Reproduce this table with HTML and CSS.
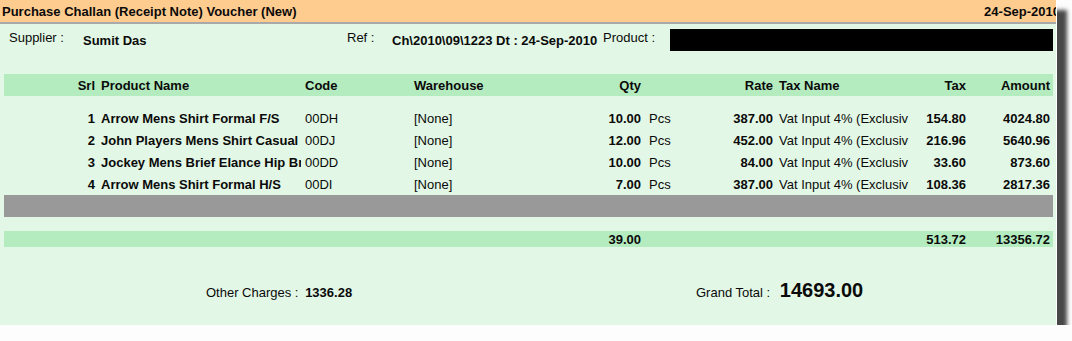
FILE: index.html
```html
<!DOCTYPE html>
<html lang="en">
<head>
    <meta charset="UTF-8">
    <meta name="viewport" content="width=device-width, initial-scale=1.0">
    <title>Purchase Challan (Receipt Note) Voucher</title>
    <link rel="stylesheet" href="styles.css">
</head>
<body>
    <div class="voucher">
        <div class="title-bar">
            <span>Purchase Challan (Receipt Note) Voucher (New)</span>
            <span class="title-date">24-Sep-2010</span>
        </div>

        <div class="party-row">
            <span class="label label-supplier">Supplier :</span>
            <span class="value value-supplier">Sumit Das</span>
            <span class="label label-ref">Ref :</span>
            <span class="value value-ref">Ch\2010\09\1223 Dt : 24-Sep-2010</span>
            <span class="label label-product">Product :</span>
            <div class="product-box"></div>
        </div>

        <div class="grid grid-head">
            <div class="c-srl">Srl</div>
            <div class="c-name">Product Name</div>
            <div class="c-code">Code</div>
            <div class="c-wh">Warehouse</div>
            <div class="c-qty">Qty</div>
            <div class="c-unit"></div>
            <div class="c-rate">Rate</div>
            <div class="c-taxname">Tax Name</div>
            <div class="c-tax">Tax</div>
            <div class="c-amt">Amount</div>
        </div>

        <div class="lines">
            <div class="grid grid-line">
                <div class="c-srl">1</div>
                <div class="c-name">Arrow Mens Shirt Formal F/S</div>
                <div class="c-code">00DH</div>
                <div class="c-wh">[None]</div>
                <div class="c-qty">10.00</div>
                <div class="c-unit">Pcs</div>
                <div class="c-rate">387.00</div>
                <div class="c-taxname">Vat Input 4% (Exclusiv</div>
                <div class="c-tax">154.80</div>
                <div class="c-amt">4024.80</div>
            </div>
            <div class="grid grid-line">
                <div class="c-srl">2</div>
                <div class="c-name">John Players Mens Shirt Casual</div>
                <div class="c-code">00DJ</div>
                <div class="c-wh">[None]</div>
                <div class="c-qty">12.00</div>
                <div class="c-unit">Pcs</div>
                <div class="c-rate">452.00</div>
                <div class="c-taxname">Vat Input 4% (Exclusiv</div>
                <div class="c-tax">216.96</div>
                <div class="c-amt">5640.96</div>
            </div>
            <div class="grid grid-line">
                <div class="c-srl">3</div>
                <div class="c-name">Jockey Mens Brief Elance Hip Brief</div>
                <div class="c-code">00DD</div>
                <div class="c-wh">[None]</div>
                <div class="c-qty">10.00</div>
                <div class="c-unit">Pcs</div>
                <div class="c-rate">84.00</div>
                <div class="c-taxname">Vat Input 4% (Exclusiv</div>
                <div class="c-tax">33.60</div>
                <div class="c-amt">873.60</div>
            </div>
            <div class="grid grid-line">
                <div class="c-srl">4</div>
                <div class="c-name">Arrow Mens Shirt Formal H/S</div>
                <div class="c-code">00DI</div>
                <div class="c-wh">[None]</div>
                <div class="c-qty">7.00</div>
                <div class="c-unit">Pcs</div>
                <div class="c-rate">387.00</div>
                <div class="c-taxname">Vat Input 4% (Exclusiv</div>
                <div class="c-tax">108.36</div>
                <div class="c-amt">2817.36</div>
            </div>
        </div>

        <!-- empty row waiting for the next item -->
        <div class="new-line"></div>

        <div class="grid grid-total">
            <div class="c-srl"></div>
            <div class="c-name"></div>
            <div class="c-code"></div>
            <div class="c-wh"></div>
            <div class="c-qty">39.00</div>
            <div class="c-unit"></div>
            <div class="c-rate"></div>
            <div class="c-taxname"></div>
            <div class="c-tax">513.72</div>
            <div class="c-amt">13356.72</div>
        </div>

        <div class="summary">
            <div class="other-charges">
                <span class="sum-label">Other Charges :</span>
                <span class="sum-value">1336.28</span>
            </div>
            <div class="grand-total">
                <span class="sum-label">Grand Total :</span>
                <span class="grand-value">14693.00</span>
            </div>
        </div>
    </div>
</body>
</html>
```

FILE: styles.css
```css
body {
    margin: 0;
    padding: 0;
    background-color: #fdfdfd;
    font-family: "Liberation Sans", Arial, sans-serif;
    font-size: 13px;
    color: #0a0a0a;
}

.voucher {
    width: 1056px;
    height: 325px;
    background-color: #e2f7e5;
    border-right: 1px solid #ffffff;
    box-shadow: 10px 10px 4px rgba(40, 40, 40, 0.85);
    overflow: hidden;
}

.title-bar {
    display: flex;
    justify-content: space-between;
    align-items: center;
    height: 22px;
    padding-left: 2px;
    background-color: #ffcc8f;
    border-bottom: 2px solid #a9a9a9;
    font-weight: bold;
    white-space: nowrap;
}

.title-date {
    margin-right: -4px;
}

/* supplier / ref / product line */
.party-row {
    display: flex;
    align-items: flex-start;
    padding: 5px 0 0 9px;
    height: 22px;
}

.label {
    line-height: 16px;
    margin-top: 1px;
    flex-shrink: 0;
}

.value {
    font-weight: bold;
    line-height: 16px;
    margin-top: 4px;
    flex-shrink: 0;
    white-space: nowrap;
}

.label-supplier { width: 74px; }
.value-supplier { width: 264px; }
.label-ref { width: 45px; }
.value-ref { width: 211px; }
.label-product { width: 67px; }

.product-box {
    width: 383px;
    height: 22px;
    background-color: #000000;
}

/* item grid */
.grid {
    display: grid;
    grid-template-columns: 93px 204px 109px 150px 83px 47px 85px 138px 55px 85px;
    margin-left: 4px;
    width: 1049px;
    align-items: center;
    white-space: nowrap;
}

.grid > div {
    overflow: hidden;
}

.grid-head {
    margin-top: 23px;
    height: 22px;
    background-color: #b4ecc0;
    font-weight: bold;
}

.lines {
    margin-top: 11px;
}

.grid-line {
    height: 22px;
}

.c-srl { text-align: right; padding-right: 2px; }
.c-name { padding-left: 4px; }
.c-code { padding-left: 4px; }
.c-wh { padding-left: 4px; }
.c-qty { text-align: right; padding-right: 2px; }
.c-unit { padding-left: 6px; }
.c-rate { text-align: right; padding-right: 2px; }
.c-taxname { padding-left: 4px; }
.c-tax { text-align: right; padding-right: 2px; }
.c-amt { text-align: right; padding-right: 3px; }

.grid-line .c-srl,
.grid-line .c-name,
.grid-line .c-qty,
.grid-line .c-rate,
.grid-line .c-tax,
.grid-line .c-amt {
    font-weight: bold;
}

.new-line {
    margin-left: 4px;
    width: 1049px;
    height: 22px;
    background-color: #999999;
}

.grid-total {
    margin-top: 14px;
    height: 16px;
    background-color: #b4ecc0;
    font-weight: bold;
}

/* footer figures */
.summary {
    display: flex;
    align-items: baseline;
    padding-top: 32px;
}

.other-charges {
    margin-left: 206px;
    width: 490px;
}

.sum-label {
    margin-right: 3px;
}

.grand-total .sum-label {
    margin-right: 6px;
}

.sum-value {
    font-weight: bold;
}

.grand-value {
    font-size: 20px;
    font-weight: bold;
}
```
